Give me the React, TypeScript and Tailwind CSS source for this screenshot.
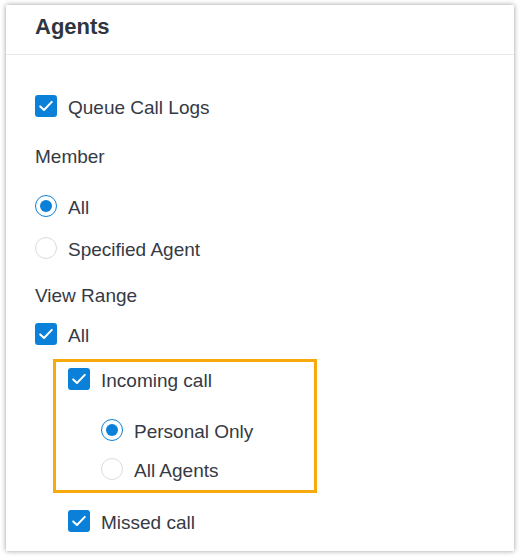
import React from "react";

const Check = () => (
  <span className="flex h-[22px] w-[22px] shrink-0 items-center justify-center rounded-[3px] bg-[#0a80d8]">
    <svg width="18" height="18" viewBox="0 0 18 18" fill="none">
      <path d="M3.2 9.4 L7 13 L14.8 4.9" stroke="white" strokeWidth="2" strokeLinecap="round" strokeLinejoin="round" />
    </svg>
  </span>
);

const Radio = ({ on }: { on?: boolean }) =>
  on ? (
    <span className="flex h-[22px] w-[22px] shrink-0 items-center justify-center rounded-full border-[1.5px] border-[#0a80d8] bg-white">
      <span className="h-[12px] w-[12px] rounded-full bg-[#0a80d8]" />
    </span>
  ) : (
    <span className="h-[22px] w-[22px] shrink-0 rounded-full border border-[#dcdcdc] bg-white" />
  );

const Label = ({ children }: { children: React.ReactNode }) => <span className="pt-[4px]">{children}</span>;

export default function App() {
  return (
    <div className="h-[558px] w-[521px] bg-white pl-[6px] pt-[5px] font-['Liberation_Sans',Arial,sans-serif] text-[19px] text-[#353a45]">
      <div className="flex h-[546px] w-[508px] flex-col bg-white shadow-[0_0_5px_rgba(0,0,0,0.4)]">
        <div className="flex h-[50px] items-center border-b border-[#e8e8e8] pl-[29px]">
          <h1 className="-mt-[6px] text-[22px] font-bold text-[#2f3541]">Agents</h1>
        </div>
        <div className="flex flex-col pl-[29px] pt-[31px]">
          <div className="flex h-[40px] items-center gap-[11px]">
            <Check />
            <Label>Queue Call Logs</Label>
          </div>
          <div className="flex h-[60px] items-center pt-[2px]">Member</div>
          <div className="flex h-[40px] items-center gap-[11px]">
            <Radio on />
            <Label>All</Label>
          </div>
          <div className="flex h-[44px] items-center gap-[11px]">
            <Radio />
            <Label>Specified Agent</Label>
          </div>
          <div className="flex h-[50px] items-center pt-[2px]">View Range</div>
          <div className="flex h-[28px] items-center gap-[11px]">
            <Check />
            <Label>All</Label>
          </div>
          <div className="ml-[18px] mt-[11px] flex h-[134px] w-[264px] flex-col border-[3px] border-[#f8aa0c] pl-[12px]">
            <div className="flex h-[34px] items-center gap-[11px]">
              <Check />
              <Label>Incoming call</Label>
            </div>
            <div className="mt-[14px] flex h-[40px] items-center gap-[11px] pl-[33px]">
              <Radio on />
              <Label>Personal Only</Label>
            </div>
            <div className="flex h-[38px] items-center gap-[11px] pl-[33px]">
              <Radio />
              <Label>All Agents</Label>
            </div>
          </div>
          <div className="ml-[33px] flex h-[56px] items-center gap-[11px]">
            <Check />
            <Label>Missed call</Label>
          </div>
        </div>
      </div>
    </div>
  );
}
